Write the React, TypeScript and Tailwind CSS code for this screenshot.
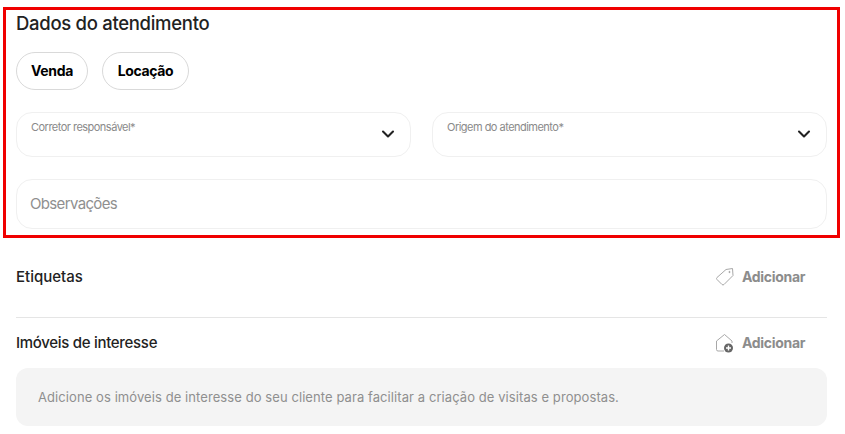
import { ChevronDown } from 'lucide-react';

function TagIcon() {
  return (
    <svg width="20" height="20" viewBox="0 0 20 20" fill="none" stroke="#a8a8a8" strokeWidth="1">
      <path d="M11 2.5 L17.5 1.5 L18 8.5 L9 17.5 Q8 18.5 7 17.5 L2 12.5 Q1 11.5 2 10.5 Z" />
      <circle cx="14.5" cy="5" r="0.6" fill="#777" />
    </svg>
  );
}

function HouseAddIcon() {
  return (
    <svg width="20" height="20" viewBox="0 0 20 20" fill="none">
      <path d="M9 18 H3 Q1.5 18 1.5 16.5 V8 L9.5 1.5 L17 8 V10" stroke="#a8a8a8" strokeWidth="1" />
      <circle cx="13.5" cy="15" r="4.5" fill="#666" />
      <path d="M13.5 12.5 V17.5 M11 15 H16" stroke="#fff" strokeWidth="1.4" />
    </svg>
  );
}

function SelectField({ label }: { label: string }) {
  return (
    <div className="flex h-[45px] flex-1 items-start justify-between rounded-2xl border border-[#f0f0f0] pl-[14px] pr-[12px]">
      <span className="mt-[6px] text-[11px] leading-[16px] tracking-[-0.52px] text-[#8a8a8a]">{label}</span>
      <ChevronDown className="mt-[11px] text-[#222]" size={20} strokeWidth={2.5} />
    </div>
  );
}

function AddButton({ icon }: { icon: React.ReactNode }) {
  return (
    <div className="flex w-[112px] items-center gap-[7px]">
      {icon}
      <span className="text-sm font-bold tracking-[-0.3px] text-[#8c8c8c]">Adicionar</span>
    </div>
  );
}

export default function App() {
  return (
    <div className="h-[434px] w-[845px] overflow-hidden bg-white font-['Inter',sans-serif]">
      {/* Dados do atendimento */}
      <section className="ml-[3px] mt-[7px] h-[231px] w-[837px] border-[3px] border-[#f00000] px-[10px]">
        <h2 className="text-[18.5px] leading-[26px] font-medium tracking-[-0.3px] text-[#222]">Dados do atendimento</h2>
        <div className="mt-[16px] flex gap-[14px]">
          <button className="h-[38px] w-[72px] rounded-full border border-[#d9d9d9] text-sm font-bold tracking-[-0.35px] text-black">Venda</button>
          <button className="h-[38px] w-[87px] rounded-full border border-[#d9d9d9] text-sm font-bold tracking-[-0.35px] text-black">Locação</button>
        </div>
        <div className="mt-[22px] flex gap-[21px]">
          <SelectField label="Corretor responsável*" />
          <SelectField label="Origem do atendimento*" />
        </div>
        <div className="mt-[22px] flex h-[50px] items-center rounded-2xl border border-[#f0f0f0] px-[13px] text-[15px] tracking-[-0.65px] text-[#8f8f8f]">
          Observações
        </div>
      </section>

      <div className="w-[843px] px-[16px]">
        <div className="flex h-[80px] items-start justify-between border-b border-[#e5e5e5] pt-[29px]">
          <span className="text-[15px] leading-5 font-medium tracking-[0px] text-[#222]">Etiquetas</span>
          <AddButton icon={<TagIcon />} />
        </div>
        <div className="flex h-[50px] items-start justify-between pt-[15px]">
          <span className="text-[15px] leading-5 font-medium tracking-[-0.3px] text-[#222]">Imóveis de interesse</span>
          <AddButton icon={<HouseAddIcon />} />
        </div>
        <div className="flex h-[58px] items-center rounded-xl bg-[#f4f4f4] px-[22px] pt-[2px] text-[13px] tracking-[0.08px] text-[#8f8f8f]">
          Adicione os imóveis de interesse do seu cliente para facilitar a criação de visitas e propostas.
        </div>
      </div>
    </div>
  );
}
